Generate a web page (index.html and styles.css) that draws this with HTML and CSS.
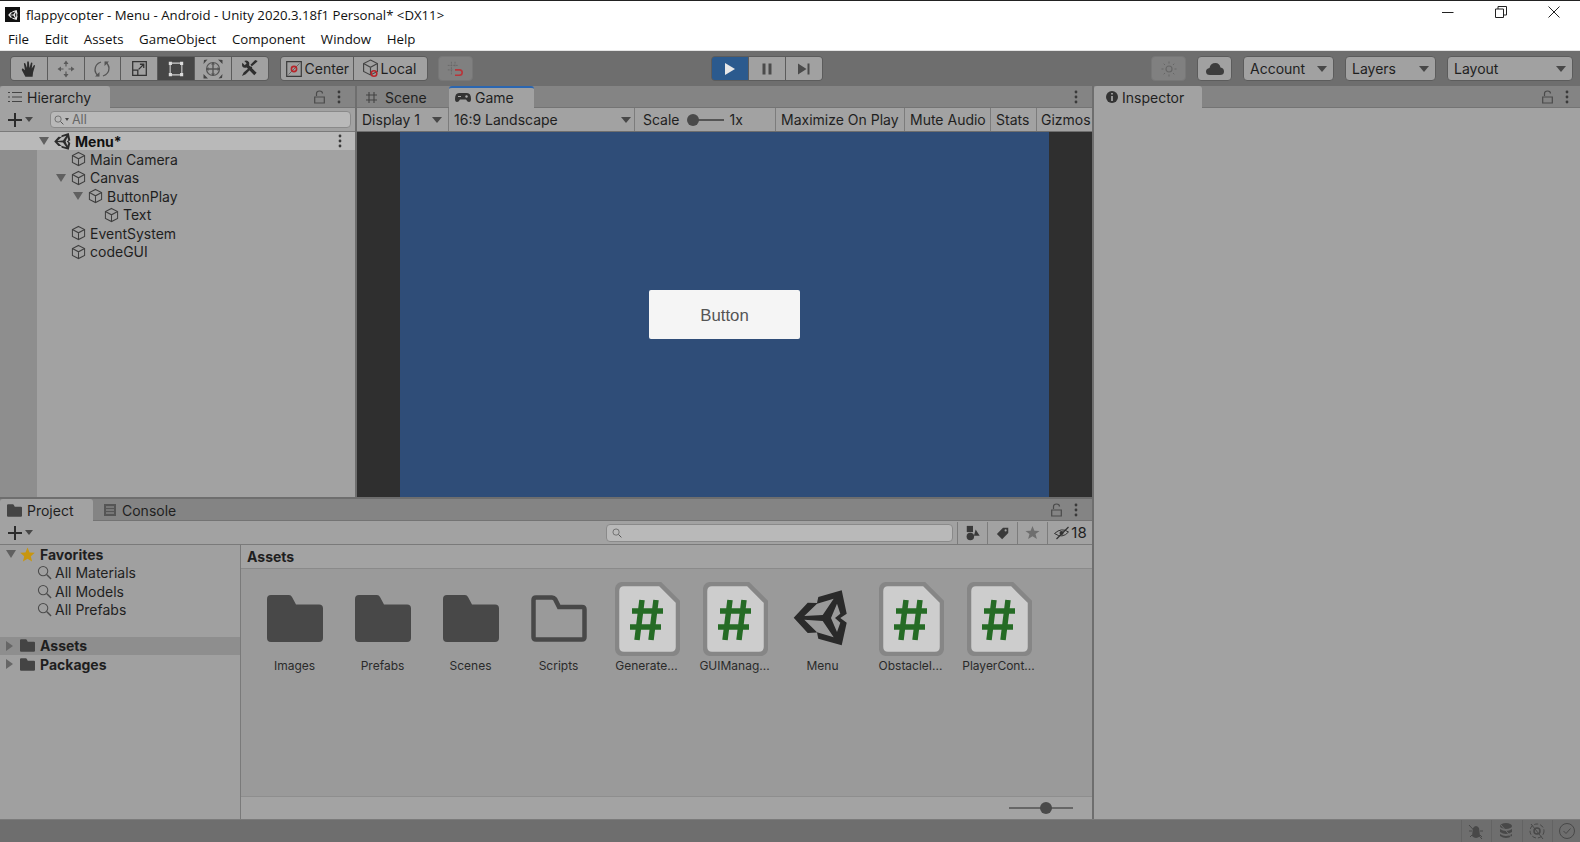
FILE: index.html
```html
<!DOCTYPE html>
<html lang="en">
<head>
  <meta charset="UTF-8" />
  <title>flappycopter - Menu - Android - Unity 2020.3.18f1 Personal* &lt;DX11&gt;</title>
  <link rel="stylesheet" href="styles.css">
</head>
<body>

  <!-- shared icons -->
  <svg class="defs" aria-hidden="true">
    <symbol id="cube" viewBox="0 0 16 16">
      <path d="M8 1 L14.5 4.3 V11.7 L8 15 L1.5 11.7 V4.3 Z M1.5 4.3 L8 7.8 L14.5 4.3 M8 7.8 V15" fill="none" stroke="currentColor" stroke-width="1.1"/>
    </symbol>
    <symbol id="unity" viewBox="0 0 56 56">
      <path fill="currentColor" fill-rule="evenodd" d="M.7 27.7 L14.7 12.7 L24 13 L25.3 7 L48.7 .3 L53.7 23.7 L47.3 28 L53.7 32.7 L48.7 55.3 L25.3 48.7 L24 42.5 L14.7 43 Z M11.3 26 L24 13.7 L40.7 8.7 L29.7 25 Z M11.3 29.7 L29.7 31 L40.7 47.3 L24 42.3 Z M38 28 L44 13.7 L47.3 23.7 L42 28 L47.3 32.7 L44 42 Z"/>
    </symbol>
    <symbol id="folder" viewBox="0 0 56 47">
      <path d="M4 0 H22 Q24 0 25 2 L29 9.5 H52 Q56 9.5 56 13.5 V43 Q56 47 52 47 H4 Q0 47 0 43 V4 Q0 0 4 0 Z"/>
    </symbol>
    <symbol id="script" viewBox="0 0 65 74">
      <path d="M9 2 H45 L63 20 V65 Q63 72 56 72 H9 Q2 72 2 65 V9 Q2 2 9 2 Z" fill="#cdcdcd" stroke="#868686" stroke-width="4.5"/>
      <path d="M27 18 L22 58 M41 18 L36 58 M17 29 H48 M15 45 H46" fill="none" stroke="#256b25" stroke-width="5.5"/>
    </symbol>
    <symbol id="lock" viewBox="0 0 11 14">
      <path d="M2.5 6 V3.5 Q2.5 1 5.5 1 Q8.5 1 8.5 3.5 M.7 7 H10.3 V13 H.7 Z" fill="none" stroke="currentColor" stroke-width="1.2"/>
    </symbol>
    <symbol id="kebab" viewBox="0 0 4 14">
      <circle cx="2" cy="2" r="1.4"/><circle cx="2" cy="7" r="1.4"/><circle cx="2" cy="12" r="1.4"/>
    </symbol>
    <symbol id="glass" viewBox="0 0 16 16">
      <circle cx="6.5" cy="6.5" r="5" fill="none" stroke="currentColor" stroke-width="1.1"/>
      <path d="M10.5 10.5 L15 15" stroke="currentColor" stroke-width="1.6"/>
    </symbol>
    <symbol id="plus" viewBox="0 0 14 14">
      <path d="M7 0 V14 M0 7 H14" stroke="#2c2c2c" stroke-width="2"/>
    </symbol>
  </svg>

  <header class="titlebar">
    <span class="app-icon"><svg width="10" height="10"><use href="#unity"/></svg></span>
    <span class="app-title">flappycopter - Menu - Android - Unity 2020.3.18f1 Personal* &lt;DX11&gt;</span>
    <div class="win-btns">
      <svg width="12" height="12" viewBox="0 0 12 12"><path d="M0 6.5 H11.5" stroke="#222" stroke-width="1"/></svg>
      <svg width="12" height="12" viewBox="0 0 12 12"><path d="M.5 3 H8.5 V11.5 H.5 Z M3 3 V.5 H11.5 V9 H8.5" fill="none" stroke="#222"/></svg>
      <svg width="12" height="12" viewBox="0 0 12 12"><path d="M.5 .5 L11.5 11.5 M11.5 .5 L.5 11.5" stroke="#222"/></svg>
    </div>
  </header>

  <nav class="menubar">
    <span>File</span><span>Edit</span><span>Assets</span><span>GameObject</span><span>Component</span><span>Window</span><span>Help</span>
  </nav>

  <div class="toolbar">
    <div class="btn-group tools">
      <button class="tool"><svg width="18" height="18" viewBox="0 0 20 20"><path d="M6 18.5 L2 11 Q1.8 9.5 3.2 9.5 L5.5 11.5 L4.3 4 Q4.8 3 5.8 3.6 L7.8 9 L8 2 Q9 1 9.8 2 L10.5 9 L12.2 3 Q13.2 2.4 13.8 3.2 L13 9.5 L15.6 5.5 Q16.6 5.4 16.7 6.4 L14.5 14 L14 18.5 Z" fill="#2e2e2e"/></svg></button>
      <button class="tool"><svg width="20" height="20" viewBox="0 0 20 20"><path d="M10 5 V7.5 M10 12.5 V15 M5 10 H7.5 M12.5 10 H15" stroke="#5a5a5a" stroke-width="1.2"/><path d="M10 1.5 L12.5 5 H7.5 Z M10 18.5 L7.5 15 H12.5 Z M1.5 10 L5 7.5 V12.5 Z M18.5 10 L15 12.5 V7.5 Z" fill="#5a5a5a"/></svg></button>
      <button class="tool"><svg width="20" height="20" viewBox="0 0 20 20"><path d="M9 3 Q3 5 3 11 Q3 14 6.5 17 M11 17 Q17 15 17 9 Q17 6 13.5 3" fill="none" stroke="#555" stroke-width="1.3"/><path d="M3 17.5 H7.5 V13 Z M17 2.5 H12.5 V7 Z" fill="#555"/></svg></button>
      <button class="tool"><svg width="17" height="17" viewBox="0 0 20 20"><path d="M2 2 H18 V18 H2 Z M2 12 H8 V18 M9 11 L15 5 M10.5 5 H15 V9.5" fill="none" stroke="#333" stroke-width="1.5"/></svg></button>
      <button class="tool on"><svg width="18" height="18" viewBox="0 0 20 20"><path d="M3.5 5 V15 M16.5 5 V15 M5 3.5 H15 M5 16.5 H15" stroke="#cfcfcf" stroke-width="1.2"/><path d="M2 2 H5.5 V5.5 H2 Z M14.5 2 H18 V5.5 H14.5 Z M2 14.5 H5.5 V18 H2 Z M14.5 14.5 H18 V18 H14.5 Z" fill="#dcdcdc"/></svg></button>
      <button class="tool"><svg width="22" height="22" viewBox="0 0 22 22"><circle cx="11" cy="11" r="6.5" fill="none" stroke="#555" stroke-width="1.2"/><path d="M11 5 V17 M5 11 H17" stroke="#555" stroke-width="1.4"/><path d="M11 4 L13 6.5 H9 Z M11 18 L9 15.5 H13 Z M4 11 L6.5 9 V13 Z M18 11 L15.5 13 V9 Z" fill="#555"/><path d="M16 1.5 L20.5 2 L20.5 6 Z M1.5 20.5 L6 20.5 L1.5 16 Z M1.5 6 L2 2 L5.5 1.5 Z M20.5 16 L20 20 L16.5 20.5 Z" fill="#444"/></svg></button>
      <button class="tool"><svg width="19" height="19" viewBox="0 0 20 20"><path d="M2.5 4 L5 6.5 L7 4.5 L4.5 2 Q8 .8 9.5 3.5 Q10 5 9.5 6.5 L17.5 14.5 L15 17 L7 9 Q4 10 2.5 8 Q1.8 6 2.5 4 Z" fill="#2e2e2e"/><path d="M18.5 2 L16 1 L11 6 L12.5 7.5 L18 3 Z M11.5 7.5 L4 14 L2 18 L6 16 L13 9 Z" fill="#2e2e2e"/></svg></button>
    </div>
    <div class="btn-group pivot">
      <button class="tool wide-center"><svg width="16" height="16" viewBox="0 0 16 16"><path d="M.7 .7 H15.3 V15.3 H.7 Z" fill="none" stroke="#3a3a3a" stroke-width="1.2"/><path d="M2.5 13.5 L13.5 2.5" stroke="#666"/><circle cx="8" cy="8" r="2.6" fill="none" stroke="#b8252a" stroke-width="1.6"/></svg>Center</button>
      <button class="tool wide-local"><svg width="19" height="19" viewBox="0 0 19 19"><use href="#cube" width="17" height="17" x="0" y="0" color="#444"/><circle cx="12" cy="14.5" r="2.8" fill="none" stroke="#b8252a" stroke-width="1.6"/></svg>Local</button>
    </div>
    <button class="tool solo off"><svg width="18" height="18" viewBox="0 0 20 20"><path d="M6 2 V16 M10 2 V7 M2 6 H14 M2 11 H8" stroke="#666" stroke-width="1" stroke-dasharray="2 1"/><path d="M10 11 H15 Q18 11 18 14 Q18 17 15 17 H10" fill="none" stroke="#b8353a" stroke-width="1.8"/></svg></button>

    <div class="btn-group play">
      <button class="tool active-play"><svg width="14" height="14" viewBox="0 0 14 14"><path d="M2 1 L12 7 L2 13 Z" fill="#e8e8e8"/></svg></button>
      <button class="tool"><svg width="14" height="14" viewBox="0 0 14 14"><path d="M2.5 1.5 H5.5 V12.5 H2.5 Z M8.5 1.5 H11.5 V12.5 H8.5 Z" fill="#4b4b4b"/></svg></button>
      <button class="tool"><svg width="14" height="14" viewBox="0 0 14 14"><path d="M1 1.5 L9.5 7 L1 12.5 Z M10.5 1.5 H12.5 V12.5 H10.5 Z" fill="#4b4b4b"/></svg></button>
    </div>

    <div class="toolbar-right">
      <button class="tool solo off sun"><svg width="16" height="16" viewBox="0 0 16 16"><circle cx="8" cy="8" r="3" fill="none" stroke="#666" stroke-width="1.2"/><path d="M8 0.5 V2.5 M8 13.5 V15.5 M.5 8 H2.5 M13.5 8 H15.5 M2.7 2.7 L4 4 M12 12 L13.3 13.3 M2.7 13.3 L4 12 M12 4 L13.3 2.7" stroke="#666"/></svg></button>
      <button class="tool solo cloud"><svg width="18" height="14" viewBox="0 0 18 14"><path d="M4 13 Q0 13 0 9.5 Q0 6.5 3.5 6 Q4.5 1 9.5 1 Q13.5 1 14.5 5.5 Q18 6 18 9.5 Q18 13 14 13 Z" fill="#3d3d3d"/></svg></button>
      <button class="dropdown w-account">Account<i class="tri-down"></i></button>
      <button class="dropdown w-layers">Layers<i class="tri-down"></i></button>
      <button class="dropdown w-layout">Layout<i class="tri-down"></i></button>
    </div>
  </div>

  <main class="workspace">
    <div class="left-col">
      <div class="top-row">

        <section class="panel hierarchy">
          <div class="tabbar">
            <div class="tab active"><svg width="14" height="12" viewBox="0 0 14 12"><path d="M0 1.5 H2 M4 1.5 H14 M0 6 H2 M4 6 H14 M0 10.5 H2 M4 10.5 H14" stroke="#444" stroke-width="1"/></svg>Hierarchy</div>
            <div class="tab-actions"><svg class="lock"><use href="#lock"/></svg><svg class="kebab"><use href="#kebab"/></svg></div>
          </div>
          <div class="panel-tools">
            <svg class="plus"><use href="#plus"/></svg><i class="tri-down small"></i>
            <div class="search hier-search"><svg class="mag" width="10" height="10"><use href="#glass"/></svg><i class="tri-down tiny"></i><span>All</span></div>
          </div>
          <div class="scene-row">
            <i class="tri-down"></i><svg class="scene-logo" width="17" height="17"><use href="#unity"/></svg><b>Menu*</b>
            <svg class="kebab row-kebab"><use href="#kebab"/></svg>
          </div>
          <ul class="tree">
            <li class="d1 leaf"><i></i><svg class="cube"><use href="#cube"/></svg>Main Camera</li>
            <li class="d1"><i class="tri-down"></i><svg class="cube"><use href="#cube"/></svg>Canvas</li>
            <li class="d2"><i class="tri-down"></i><svg class="cube"><use href="#cube"/></svg>ButtonPlay</li>
            <li class="d3 leaf"><i></i><svg class="cube"><use href="#cube"/></svg>Text</li>
            <li class="d1 leaf"><i></i><svg class="cube"><use href="#cube"/></svg>EventSystem</li>
            <li class="d1 leaf"><i></i><svg class="cube"><use href="#cube"/></svg>codeGUI</li>
          </ul>
        </section>

        <section class="panel game">
          <div class="tabbar">
            <div class="tab scene-tab"><svg width="13" height="13" viewBox="0 0 13 13"><path d="M4 1 V12 M9 1 V12 M1 4 H12 M1 9 H12" stroke="#444" stroke-width="1.1"/></svg>Scene</div>
            <div class="tab active game-tab"><svg width="16" height="11" viewBox="0 0 16 11"><path d="M4 1 H12 Q16 1 16 7 Q16 10 14 10 Q12.5 10 11 7.5 H5 Q3.5 10 2 10 Q0 10 0 7 Q0 1 4 1 Z" fill="#333"/><circle cx="11.5" cy="4.5" r="1.2" fill="#aaa"/><path d="M3 4.5 H6" stroke="#aaa"/></svg>Game</div>
            <div class="tab-actions"><svg class="kebab"><use href="#kebab"/></svg></div>
          </div>
          <div class="game-tools">
            <div class="gt gt-display">Display 1<i class="tri-down"></i></div>
            <div class="gt gt-aspect">16:9 Landscape<i class="tri-down"></i></div>
            <div class="gt gt-scale">Scale<span class="scale-slider"></span>1x</div>
            <div class="gt gt-max">Maximize On Play</div>
            <div class="gt gt-mute">Mute Audio</div>
            <div class="gt gt-stats">Stats</div>
            <div class="gt gt-gizmos">Gizmos</div>
          </div>
          <div class="game-view">
            <div class="letterbox"></div>
            <div class="viewport"><div class="game-button">Button</div></div>
            <div class="letterbox"></div>
          </div>
        </section>
      </div>

      <section class="panel project">
        <div class="tabbar">
          <div class="tab active project-tab"><svg width="15" height="13" fill="#444"><use href="#folder"/></svg>Project</div>
          <div class="tab console-tab"><svg width="14" height="14" viewBox="0 0 14 14"><path d="M1 1 H13 V13 H1 Z" fill="#555"/><path d="M3 4 H11 M3 7 H11 M3 10 H11" stroke="#999"/></svg>Console</div>
          <div class="tab-actions"><svg class="lock"><use href="#lock"/></svg><svg class="kebab"><use href="#kebab"/></svg></div>
        </div>
        <div class="panel-tools project-tools">
          <svg class="plus"><use href="#plus"/></svg><i class="tri-down small"></i>
          <div class="search project-search"><svg class="mag" width="10" height="10"><use href="#glass"/></svg></div>
          <div class="filter"><svg width="16" height="16" viewBox="0 0 18 18"><path d="M2 1 H9 V8 H2 Z" fill="#3a3a3a"/><circle cx="6" cy="13" r="4.2" fill="#3a3a3a"/><path d="M12 5 L16.5 12 H10 Z" fill="#3a3a3a"/></svg></div>
          <div class="filter"><svg width="14" height="14" viewBox="0 0 16 16"><path d="M8 2 H14 V8 L7 15 L1 9 Z" fill="#3a3a3a"/><circle cx="11" cy="5" r="1.2" fill="#a2a2a2"/></svg></div>
          <div class="filter"><svg width="15" height="15" viewBox="0 0 16 16"><path d="M8 1 L10 6 L15.5 6.3 L11.2 9.7 L12.7 15 L8 12 L3.3 15 L4.8 9.7 L.5 6.3 L6 6 Z" fill="#6e6e6e"/></svg></div>
          <div class="filter hidden-count"><svg width="18" height="14" viewBox="0 0 17 14"><path d="M1 7.5 Q8 1 15 6 Q9 13 1 7.5 Z" fill="none" stroke="#333"/><circle cx="8" cy="7" r="2" fill="#333"/><path d="M3 13 L15 1" stroke="#333" stroke-width="1.2"/></svg>18</div>
        </div>
        <div class="browser">
          <aside class="sidebar">
            <div class="side-row head"><i class="tri-down"></i><svg class="star" width="15" height="15" viewBox="0 0 16 16"><path d="M8 .5 L10.2 5.8 L15.8 6.2 L11.5 9.9 L12.9 15.5 L8 12.4 L3.1 15.5 L4.5 9.9 L.2 6.2 L5.8 5.8 Z" fill="#c8960f"/></svg><b>Favorites</b></div>
            <div class="side-row fav"><svg width="15" height="15" color="#4b4b4b"><use href="#glass"/></svg>All Materials</div>
            <div class="side-row fav"><svg width="15" height="15" color="#4b4b4b"><use href="#glass"/></svg>All Models</div>
            <div class="side-row fav"><svg width="15" height="15" color="#4b4b4b"><use href="#glass"/></svg>All Prefabs</div>
            <div class="side-gap"></div>
            <div class="side-row head selected"><i class="tri-right"></i><svg width="15" height="13" fill="#444"><use href="#folder"/></svg><b>Assets</b></div>
            <div class="side-row head"><i class="tri-right"></i><svg width="15" height="13" fill="#444"><use href="#folder"/></svg><b>Packages</b></div>
          </aside>
          <div class="assets">
            <div class="assets-head">Assets</div>
            <div class="asset-grid">
              <div class="asset"><div class="thumb"><svg class="ico-folder"><use href="#folder"/></svg></div><span>Images</span></div>
              <div class="asset"><div class="thumb"><svg class="ico-folder"><use href="#folder"/></svg></div><span>Prefabs</span></div>
              <div class="asset"><div class="thumb"><svg class="ico-folder"><use href="#folder"/></svg></div><span>Scenes</span></div>
              <div class="asset"><div class="thumb"><svg class="ico-folder empty" viewBox="0 0 56 47"><path d="M5 2.5 H21 Q23 2.5 24 4 L28 12 H51 Q53.5 12 53.5 14.5 V42 Q53.5 44.5 51 44.5 H5 Q2.5 44.5 2.5 42 V5 Q2.5 2.5 5 2.5 Z" fill="none" stroke="#484848" stroke-width="4.5"/></svg></div><span>Scripts</span></div>
              <div class="asset"><div class="thumb"><svg class="ico-script"><use href="#script"/></svg></div><span>Generate...</span></div>
              <div class="asset"><div class="thumb"><svg class="ico-script"><use href="#script"/></svg></div><span>GUIManag...</span></div>
              <div class="asset"><div class="thumb"><svg class="ico-unity"><use href="#unity"/></svg></div><span>Menu</span></div>
              <div class="asset"><div class="thumb"><svg class="ico-script"><use href="#script"/></svg></div><span>ObstacleI...</span></div>
              <div class="asset"><div class="thumb"><svg class="ico-script"><use href="#script"/></svg></div><span>PlayerCont...</span></div>
            </div>
            <div class="assets-foot"><span class="size-slider"></span></div>
          </div>
        </div>
      </section>
    </div>

    <section class="panel inspector">
      <div class="tabbar">
        <div class="tab active inspector-tab"><svg width="14" height="14" viewBox="0 0 14 14"><circle cx="7" cy="7" r="6" fill="#333"/><path d="M7 3 V4.6 M7 6 V11" stroke="#a2a2a2" stroke-width="1.8"/></svg>Inspector</div>
        <div class="tab-actions"><svg class="lock"><use href="#lock"/></svg><svg class="kebab"><use href="#kebab"/></svg></div>
      </div>
    </section>
  </main>

  <footer class="statusbar">
    <span class="stat"><svg width="18" height="18" viewBox="0 0 18 18"><path d="M6 6 Q9 2 12 6 L13 14 Q9 18 5 14 Z" fill="#484848"/><path d="M2 3 L15 17 M2 9 H5 M13 9 H16 M3 15 L5 13 M15 15 L13 13" stroke="#484848"/></svg></span>
    <span class="stat"><svg width="18" height="18" viewBox="0 0 18 18"><ellipse cx="9" cy="4" rx="6" ry="3" fill="#484848"/><path d="M3 7 Q9 11 15 7 V10 Q9 14 3 10 Z M3 12 Q9 16 15 12 V14 Q9 18 3 14 Z" fill="#484848"/><path d="M4 3 L16 17" stroke="#6e6e6e"/></svg></span>
    <span class="stat"><svg width="18" height="18" viewBox="0 0 18 18"><circle cx="9" cy="9" r="7" fill="none" stroke="#484848" stroke-dasharray="4 2"/><circle cx="9" cy="9" r="3" fill="none" stroke="#484848" stroke-width="1.5"/><path d="M3 2 L15 17" stroke="#484848"/></svg></span>
    <span class="stat"><svg width="18" height="18" viewBox="0 0 18 18"><circle cx="9" cy="9" r="7.5" fill="none" stroke="#484848"/><path d="M5.5 9 L8 11.5 L12.5 6.5" fill="none" stroke="#484848"/></svg></span>
  </footer>

</body>
</html>
```

FILE: styles.css
```css
* {
  box-sizing: border-box;
}

html, body {
  margin: 0;
  height: 100%;
}

body {
  width: 1580px;
  height: 842px;
  overflow: hidden;
  display: flex;
  flex-direction: column;
  font-family: Inter, "Liberation Sans", sans-serif;
  font-size: 14px;
  color: #1f1f1f;
  background: #6e6e6e;
}

.defs {
  display: none;
}

ul {
  list-style: none;
  margin: 0;
  padding: 0;
}

button {
  font: inherit;
  color: inherit;
  border: none;
  padding: 0;
  background: none;
}

/* window chrome */
.titlebar {
  height: 27px;
  flex: none;
  display: flex;
  align-items: center;
  padding: 1px 0 0 5px;
  background: #fff;
  border-top: 1px solid #222;
  font-family: "Open Sans", sans-serif;
  font-size: 13.2px;
  color: #111;
}

.app-icon {
  width: 15px;
  height: 15px;
  margin-right: 6px;
  background: #111;
  color: #eee;
  display: flex;
  align-items: center;
  justify-content: center;
}

.win-btns {
  margin-left: auto;
  margin-right: 20px;
  display: flex;
  gap: 41px;
  margin-top: -2px;
  margin-bottom: 3px;
}

.menubar {
  height: 24px;
  flex: none;
  display: flex;
  gap: 15.6px;
  padding: 0 0 0 8px;
  align-items: center;
  background: #fff;
  font-family: "Open Sans", sans-serif;
  font-size: 13.3px;
  color: #111;
  border-bottom: 1px solid #e4e4e4;
}

/* main toolbar */
.toolbar {
  height: 35px;
  flex: none;
  display: flex;
  align-items: center;
  padding: 0 7px 0 10px;
  background: #6e6e6e;
}

.btn-group {
  display: flex;
  gap: 1px;
  background: #5c5c5c;
  border: 1px solid #5c5c5c;
  border-radius: 4px;
  overflow: hidden;
}

.tool {
  width: 35.8px;
  height: 23px;
  display: flex;
  align-items: center;
  justify-content: center;
  background: #a1a1a1;
}

.tool.on {
  background: #464646;
}

.pivot {
  margin-left: 11px;
}

.wide-center {
  width: 72px;
  justify-content: flex-start;
  gap: 3px;
  padding-left: 5px;
}

.wide-local {
  width: 73px;
  justify-content: flex-start;
  gap: 0;
  padding-left: 8px;
}

.solo {
  width: 35px;
  height: 25px;
  border: 1px solid #5c5c5c;
  border-radius: 4px;
}

.solo.off {
  background: #808080;
  border-color: #777;
  margin-left: 10px;
}

.play {
  margin-left: 238px;
}

.play .tool {
  width: 36px;
}

.active-play.tool {
  background: #2b5a8e;
}

.toolbar-right {
  margin-left: auto;
  display: flex;
  gap: 11px;
  align-items: center;
}

.toolbar-right .solo {
  margin-left: 0;
}

.dropdown {
  height: 25px;
  display: flex;
  align-items: center;
  justify-content: space-between;
  padding: 0 6px;
  background: #a1a1a1;
  border: 1px solid #5c5c5c;
  border-radius: 4px;
}

.w-account, .w-layers {
  width: 91px;
}

.w-layout {
  width: 126px;
}

.tri-down, .tri-right {
  display: inline-block;
  width: 0;
  height: 0;
  flex: none;
}

.tri-down {
  border-left: 5px solid transparent;
  border-right: 5px solid transparent;
  border-top: 6px solid #484848;
}

.tri-down.small {
  border-left-width: 4px;
  border-right-width: 4px;
  border-top-width: 5px;
}

.tri-down.tiny {
  border-left-width: 2px;
  border-right-width: 2px;
  border-top-width: 3px;
}

.tri-right {
  border-top: 5px solid transparent;
  border-bottom: 5px solid transparent;
  border-left: 7px solid #666;
}

/* docked panels */
.workspace {
  height: 733px;
  flex: none;
  display: flex;
  gap: 2px;
}

.left-col {
  width: 1092px;
  display: flex;
  flex-direction: column;
  gap: 2px;
}

.top-row {
  height: 411px;
  display: flex;
  gap: 2px;
}

.panel {
  display: flex;
  flex-direction: column;
  background: #a2a2a2;
}

.hierarchy {
  width: 355px;
}

.game, .project, .inspector {
  flex: 1;
}

.tabbar {
  height: 22px;
  flex: none;
  display: flex;
  background: #848484;
  border-bottom: 1px solid #747474;
}

.tab {
  height: 22px;
  display: flex;
  align-items: center;
  gap: 5px;
  padding-left: 8px;
  color: #1f1f1f;
}

.tab.active {
  background: #a2a2a2;
  border-radius: 3px 3px 0 0;
}

.hierarchy .tab {
  width: 110px;
}

.scene-tab {
  width: 92px;
  gap: 7px;
}

.game-tab.active {
  width: 85px;
  gap: 4px;
  padding: 0 0 2px 6px;
  border-top: 2px solid #2b66b0;
}

.project-tab {
  width: 93px;
  padding-left: 7px;
}

.console-tab {
  padding-left: 10px;
  gap: 5px;
}

.inspector-tab {
  width: 108px;
  padding-left: 11px;
  gap: 3px;
}

.tab-actions {
  margin-left: auto;
  display: flex;
  align-items: center;
  gap: 12px;
  padding-right: 14px;
  color: #4a4a4a;
}

.inspector .tab-actions {
  padding-right: 11px;
}

.lock {
  width: 11px;
  height: 14px;
}

.kebab {
  width: 4px;
  height: 14px;
  fill: #3a3a3a;
}

.panel-tools {
  height: 24px;
  flex: none;
  display: flex;
  align-items: center;
  padding-left: 8px;
  border-bottom: 1px solid #7a7a7a;
}

.plus {
  width: 14px;
  height: 14px;
  margin-right: 3px;
  flex: none;
}

.search {
  height: 17px;
  display: flex;
  align-items: center;
  gap: 1px;
  background: #b9b9b9;
  border: 1px solid #8a8a8a;
  border-radius: 4px;
  color: #666;
  font-size: 12.5px;
}

.mag {
  color: #555;
}

.hier-search {
  width: 301px;
  margin-left: 17px;
  padding-left: 3px;
}

.hier-search span {
  margin-left: 2px;
}

/* hierarchy */
.scene-row {
  height: 18px;
  flex: none;
  display: flex;
  align-items: center;
  padding-left: 39px;
  background: #b9b9b9;
  color: #111;
}

.scene-row .tri-down {
  border-top-color: #606060;
  border-top-width: 8px;
}

.scene-logo {
  margin: 0 4px 0 5px;
  color: #2b2b2b;
}

.row-kebab {
  margin-left: auto;
  margin-right: 13px;
}

.tree {
  flex: 1;
  background: linear-gradient(90deg, #8e8e8e 37px, #a2a2a2 37px);
}

.tree li {
  height: 18.5px;
  display: flex;
  align-items: center;
  color: #1f1f1f;
}

.tree li i {
  width: 10px;
  margin-right: 2px;
  flex: none;
  border-top-color: #606060;
  border-top-width: 8px;
}

.tree li.leaf i {
  height: 1px;
  border: none;
}

.d1 {
  padding-left: 56px;
}

.d2 {
  padding-left: 73px;
}

.d3 {
  padding-left: 89px;
}

.cube {
  width: 15px;
  height: 16px;
  margin: 0 4px 0 3px;
  color: #3f3f3f;
  flex: none;
}

/* game view */
.game-tools {
  height: 24px;
  flex: none;
  display: flex;
  border-bottom: 1px solid #6e6e6e;
}

.gt {
  display: flex;
  align-items: center;
  justify-content: space-between;
  padding: 0 6px 0 5px;
  border-right: 1px solid #7c7c7c;
  white-space: nowrap;
}

.gt-display {
  width: 92px;
}

.gt-aspect {
  width: 186px;
  padding-right: 3px;
}

.gt-scale {
  width: 141px;
  padding-left: 8px;
  justify-content: flex-start;
}

.gt-max {
  width: 129px;
}

.gt-mute {
  width: 86px;
}

.gt-stats {
  width: 46px;
}

.gt-gizmos {
  flex: 1;
  border-right: none;
  padding: 0 0 0 4px;
}

.scale-slider {
  position: relative;
  width: 32px;
  height: 2px;
  margin: 0 6px 0 12px;
  background: #555;
}

.scale-slider::before {
  content: "";
  position: absolute;
  left: -5px;
  top: -5px;
  width: 12px;
  height: 12px;
  border-radius: 50%;
  background: #4a4a4a;
}

.game-view {
  flex: 1;
  display: flex;
}

.letterbox {
  width: 43px;
  background: #2f2f2f;
}

.viewport {
  flex: 1;
  display: flex;
  align-items: center;
  justify-content: center;
  background: #2f4d78;
}

.game-button {
  width: 151px;
  height: 49px;
  padding-top: 2px;
  display: flex;
  align-items: center;
  justify-content: center;
  background: #f5f5f5;
  border-radius: 2px;
  font-family: "Liberation Sans", sans-serif;
  font-size: 16.8px;
  color: #555;
}

/* project window */
.project-search {
  width: 347px;
  height: 18px;
  margin-left: auto;
  padding-left: 5px;
}

.filter {
  width: 30px;
  height: 22px;
  display: flex;
  align-items: center;
  justify-content: center;
  border-left: 1px solid #7c7c7c;
}

.project-search + .filter {
  margin-left: 4px;
}

.hidden-count {
  width: 45px;
  gap: 0;
  font-size: 15px;
}

.browser {
  flex: 1;
  display: flex;
  min-height: 0;
}

.sidebar {
  width: 241px;
  flex: none;
  border-right: 1px solid #7a7a7a;
  background: #a0a0a0;
}

.side-row {
  height: 18.5px;
  display: flex;
  align-items: center;
  color: #1f1f1f;
}

.side-row.head {
  padding-left: 6px;
  gap: 4px;
}

.side-row.head svg {
  margin-right: 1px;
}

.side-row.head .tri-down {
  border-top-color: #606060;
  border-top-width: 8px;
}

.side-row.head .tri-right {
  margin-right: 3px;
}

.side-row.fav {
  padding-left: 37px;
  gap: 3px;
}

.side-row.selected {
  background: #8e8e8e;
}

.side-gap {
  height: 17.5px;
}

.assets {
  flex: 1;
  display: flex;
  flex-direction: column;
  background: #9a9a9a;
}

.assets-head {
  height: 24px;
  flex: none;
  display: flex;
  align-items: center;
  padding-left: 6px;
  font-weight: 700;
  background: #a3a3a3;
  border-bottom: 1px solid #8a8a8a;
}

.asset-grid {
  flex: 1;
  display: flex;
  align-items: flex-start;
  padding: 13px 0 0 10px;
}

.asset {
  width: 88px;
  display: flex;
  flex-direction: column;
  align-items: center;
  font-size: 12px;
  color: #2a2a2a;
}

.thumb {
  height: 74px;
  display: flex;
  align-items: center;
  justify-content: center;
  margin-bottom: 2px;
}

.asset span {
  margin-left: -1px;
}

.ico-folder {
  width: 56px;
  height: 47px;
  margin-bottom: 2px;
  fill: #484848;
}

.ico-script {
  width: 65px;
  height: 74px;
}

.ico-unity {
  width: 56px;
  height: 56px;
  margin: 0 5px 2px 0;
  color: #2a2a2a;
}

.assets-foot {
  height: 23px;
  flex: none;
  display: flex;
  align-items: center;
  justify-content: flex-end;
  padding-right: 19px;
  background: #a3a3a3;
  border-top: 1px solid #8e8e8e;
}

.size-slider {
  position: relative;
  width: 64px;
  height: 2px;
  background: #666;
}

.size-slider::after {
  content: "";
  position: absolute;
  left: 31px;
  top: -5px;
  width: 12px;
  height: 12px;
  border-radius: 50%;
  background: #4a4a4a;
}

/* status bar */
.statusbar {
  flex: 1;
  display: flex;
  justify-content: flex-end;
  background: #6e6e6e;
  border-top: 1px solid #7b7b7b;
}

.stat {
  width: 30.5px;
  display: flex;
  align-items: center;
  padding-left: 5px;
  border-left: 1px solid #636363;
}

.stat:last-child {
  width: 28px;
}
```
